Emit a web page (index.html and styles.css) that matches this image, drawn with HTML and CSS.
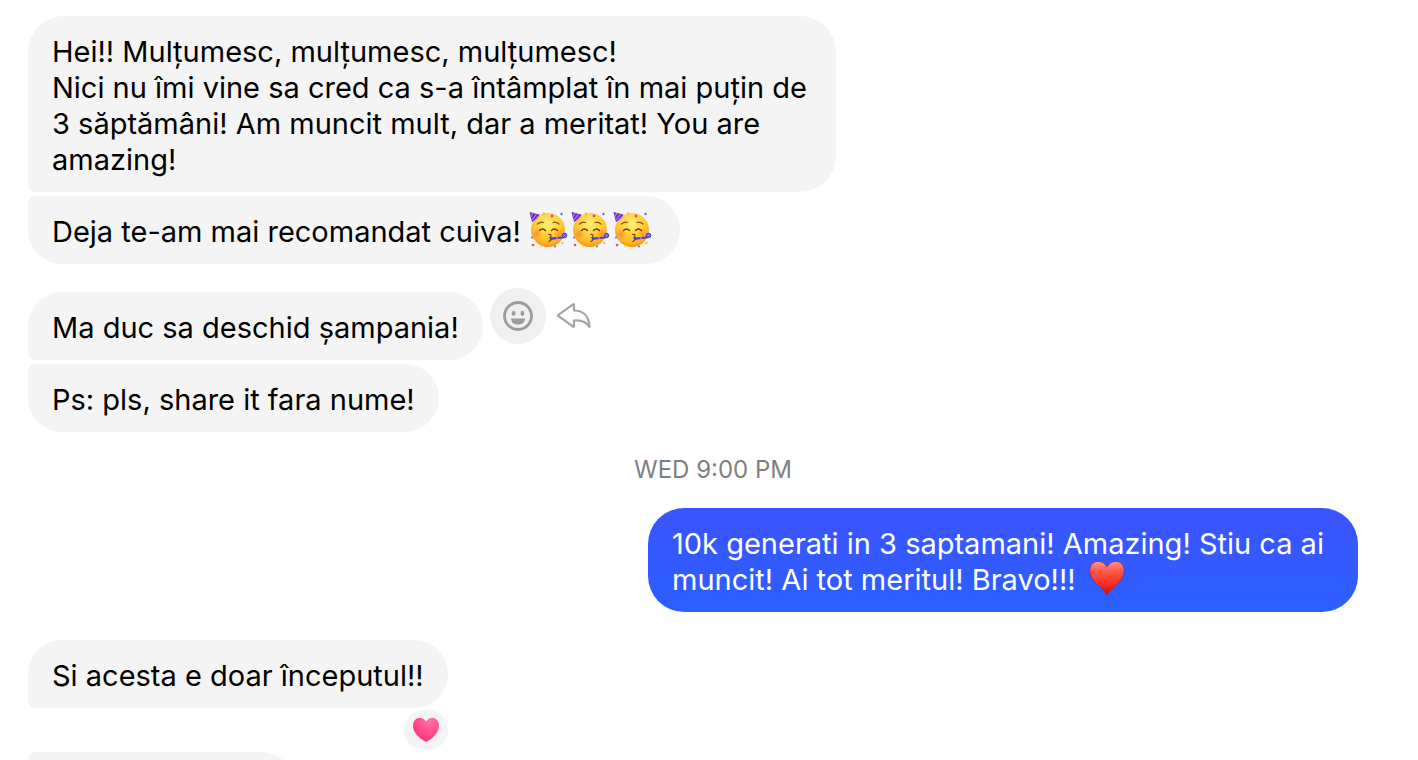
FILE: index.html
```html
<!DOCTYPE html>
<html lang="ro">
<head>
<meta charset="utf-8">
<meta name="viewport" content="width=device-width, initial-scale=1">
<title>Chat</title>
<link rel="stylesheet" href="styles.css">
</head>
<body>
<svg class="defs" aria-hidden="true">
  <defs>
    <radialGradient id="face" cx="50%" cy="32%" r="68%">
      <stop offset="0" stop-color="#fff07a"/>
      <stop offset=".5" stop-color="#ffd03a"/>
      <stop offset=".85" stop-color="#fbb024"/>
      <stop offset="1" stop-color="#ee9414"/>
    </radialGradient>
    <radialGradient id="blush"><stop offset="0" stop-color="#ff6a2c" stop-opacity=".6"/><stop offset="1" stop-color="#ff8a2c" stop-opacity="0"/></radialGradient>
    <linearGradient id="red" x1="0" y1="0" x2="0" y2="1">
      <stop offset="0" stop-color="#ff9a8c"/>
      <stop offset=".25" stop-color="#ff5d52"/>
      <stop offset=".65" stop-color="#fb3026"/>
      <stop offset="1" stop-color="#c4120a"/>
    </linearGradient>
    <radialGradient id="pink" cx="65%" cy="15%" r="70%">
      <stop offset="0" stop-color="#ff719d"/>
      <stop offset="1" stop-color="#ff3b85"/>
    </radialGradient>
    <symbol id="party" viewBox="0 0 40 40">
      <circle cx="19" cy="20" r="17" fill="url(#face)"/>
      <circle cx="8" cy="24" r="6" fill="url(#blush)"/>
      <circle cx="30" cy="24" r="6" fill="url(#blush)"/>
      <path d="M.5 2 10.500 4.500Q9 9.500 3 12Z" fill="#5a3bcb"/>
      <path d="M4 3 1.800 7M7.500 4 2.800 10.500M9.500 6 5 11" stroke="#e07be0" stroke-width="1"/>
      <path d="M8.500 14q3-2.500 6-1.500M24 12.500q3-1 6 1.500" fill="none" stroke="#8a5210" stroke-width="1.300" stroke-linecap="round"/>
      <path d="M10.500 20.500q3-3 6 0M22.500 20.500q3-3 6 0" fill="none" stroke="#6b3a0a" stroke-width="1.400" stroke-linecap="round"/>
      <path d="M19.500 24.500q4.500-.5 1.500 3 3.500 1-1 4" fill="none" stroke="#80420c" stroke-width="1.200" stroke-linecap="round"/>
      <path d="M20.500 27.500 35 26.500v1.800L21 30z" fill="#4643c9"/>
      <circle cx="35.500" cy="25.500" r="2.300" fill="#7c6cd8" stroke="#4540b4" stroke-width="1"/>
      <path d="M27 28h2" stroke="#e26dc3" stroke-width="1.500"/>
      <circle cx="23" cy="6" r="1.400" fill="#e44674"/><circle cx="15" cy="3.500" r="1" fill="#ffab28"/>
      <circle cx="32.500" cy="4" r="1.200" fill="#4976d9"/><circle cx="34.500" cy="12.500" r="1" fill="#ffe14b"/>
      <circle cx="3" cy="27.500" r="1" fill="#4976d9"/><circle cx="4" cy="35" r="1.300" fill="#e44674"/>
      <circle cx="12" cy="36.500" r="1" fill="#ffdb48"/><circle cx="26" cy="36.500" r="1" fill="#4976d9"/>
      <circle cx="33.500" cy="33" r="1.200" fill="#ffad62"/>
    </symbol>
  </defs>
</svg>
<main class="chat">
  <div class="group">
    <p class="bubble first">Hei!! Mulțumesc, mulțumesc, mulțumesc!<br>Nici nu îmi vine sa cred ca s-a întâmplat în mai puțin de 3 săptămâni! Am muncit mult, dar a meritat! You are amazing!</p>
    <p class="bubble last">Deja te-am mai recomandat cuiva! <span class="emojis"><svg class="emoji" role="img" aria-label="petrecere"><use href="#party"/></svg><svg class="emoji" role="img" aria-label="petrecere"><use href="#party"/></svg><svg class="emoji" role="img" aria-label="petrecere"><use href="#party"/></svg></span></p>
  </div>
  <div class="group">
    <div class="row">
      <p class="bubble first">Ma duc sa deschid șampania!</p>
      <div class="actions">
        <button class="action react" type="button" aria-label="React">
          <svg width="32" height="32" viewBox="0 0 32 32"><circle cx="16" cy="16" r="13.500" fill="none" stroke="#9c9c9c" stroke-width="2.800"/><ellipse cx="11.600" cy="13.300" rx="1.900" ry="2.600" fill="#9c9c9c"/><ellipse cx="20.400" cy="13.300" rx="1.900" ry="2.600" fill="#9c9c9c"/><path d="M9.500 18.500h13q.8 0 .6.800-1.100 5.200-7.100 5.200t-7.100-5.200q-.2-.8.600-.8z" fill="#9c9c9c"/></svg>
        </button>
        <button class="action" type="button" aria-label="Reply">
          <svg width="36" height="28" viewBox="0 0 36 28"><path d="M18 3v5.500c9 0 15 5.500 15.500 16.500-3-5-8-7-15.500-6.500V24q0 1.300-1 .5L2.500 14.200q-1-.7 0-1.400L17 2.300q1-.6 1 .7z" fill="none" stroke="#a5a5a5" stroke-width="2.200" stroke-linejoin="round"/></svg>
        </button>
      </div>
    </div>
    <p class="bubble last">Ps: pls, share it fara nume!</p>
  </div>
  <time class="stamp">WED 9:00 PM</time>
  <p class="bubble sent">10k generati in 3 saptamani! Amazing! Stiu ca ai muncit! Ai tot meritul! Bravo!!! <svg class="emoji heart" viewBox="0 0 40 40" role="img" aria-label="inimă"><path d="M20 37C15 29 3 23 3 12.500 3 2 15 .5 20 9 25 .5 37 2 37 12.500 37 23 25 29 20 37Z" fill="url(#red)" stroke="#c91c20" stroke-width=".7"/></svg></p>
  <div class="group">
    <div class="reacted">
      <p class="bubble first">Si acesta e doar începutul!!</p>
      <button class="reaction" type="button" aria-label="1 reaction"><svg width="28" height="26" viewBox="0 0 28 26"><path d="M14 25C10 23 1 17 1 9 1 0 10-1 14 4.500 18-1 27 0 27 9 27 17 18 23 14 25Z" fill="url(#pink)"/></svg></button>
    </div>
    <div class="bubble last next"></div>
  </div>
</main>
</body>
</html>
```
FILE: styles.css
```css
* { box-sizing: border-box; }
body { margin: 0; background: #fff; color: #000; font-family: Inter, "Liberation Sans", sans-serif; font-size: 29px; line-height: 36px; }
p { margin: 0; }
button { border: 0; padding: 0; background: none; display: grid; place-items: center; cursor: pointer; }
.defs { position: absolute; width: 0; height: 0; }
.chat { display: flex; flex-direction: column; gap: 28px; height: 100vh; overflow: hidden; padding: 16px 60px 0 28px; }
.group { display: flex; flex-direction: column; align-items: flex-start; gap: 4px; flex-shrink: 0; }
.bubble { max-width: 808px; min-height: 68px; padding: 18px 24px 14px; border-radius: 36px; background: #f4f4f4; }
.first { border-bottom-left-radius: 8px; }
.last { border-top-left-radius: 8px; }
.emojis { display: inline-flex; gap: 2px; margin-right: 3px; vertical-align: top; }
.emoji { width: 40px; height: 40px; margin: -4px 0; vertical-align: top; }
.heart { margin-left: 3px; }
.row { display: flex; align-items: flex-start; gap: 7px; }
.actions { display: flex; margin-top: -4px; }
.action { width: 56px; height: 56px; border-radius: 50%; }
.react { background: #f0f0f0; }
.stamp { align-self: center; margin: -6px 0; padding-left: 40px; color: #7f7f7f; font-size: 24px; line-height: 32px; }
.sent { align-self: flex-end; flex-shrink: 0; max-width: 710px; background: linear-gradient(#3b54ff, #2c5fff); color: #fff; }
.reacted { display: flex; flex-direction: column; align-items: flex-end; gap: 2px; margin-bottom: -2px; }
.reaction { width: 44px; height: 40px; border-radius: 20px; background: #f4f4f4; }
.next { width: 267px; }
```
